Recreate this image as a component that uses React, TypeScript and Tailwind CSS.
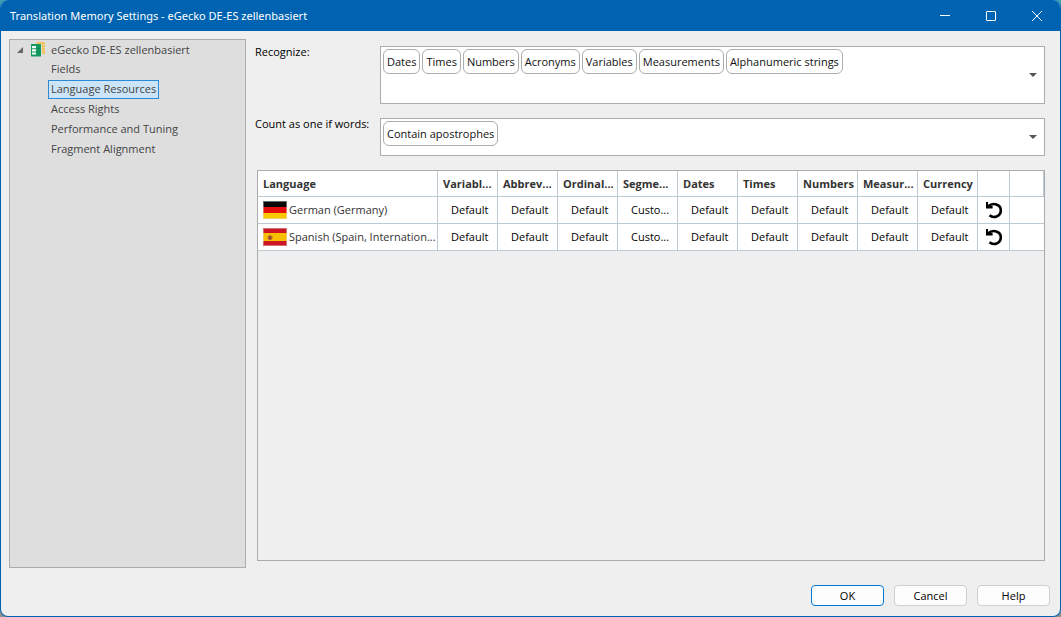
import { useState } from "react";

const pages = [
  "Fields",
  "Language Resources",
  "Access Rights",
  "Performance and Tuning",
  "Fragment Alignment",
];

const recognizers = [
  "Dates",
  "Times",
  "Numbers",
  "Acronyms",
  "Variables",
  "Measurements",
  "Alphanumeric strings",
];

const resourceColumns = [
  "Variabl...",
  "Abbrev...",
  "Ordinal...",
  "Segme...",
  "Dates",
  "Times",
  "Numbers",
  "Measur...",
  "Currency",
];

const resourceValues = [
  "Default",
  "Default",
  "Default",
  "Custo...",
  "Default",
  "Default",
  "Default",
  "Default",
  "Default",
];

function MemoryIcon() {
  return (
    <svg width="15" height="15" viewBox="0 0 15 15" aria-hidden="true">
      <path d="M5.500 0H14v12h-3V2H5.500z" fill="#f0c35e" />
      <path d="M12 2.500h1.500M12 5.500h1.500M12 8.500h1.500" stroke="#e6dcc0" strokeWidth=".8" />
      <rect x="0" y="2" width="10" height="12.500" rx=".5" fill="#14995f" />
      <path d="M1 4h4v2.200H1zM1 7.200h4v2.200H1zM1 10.400h4v2.200H1z" fill="#f4fbf7" />
      <path d="M6.500 6.700h2.500M6.500 9.900h2.500" stroke="#0c7d4b" strokeWidth=".8" />
    </svg>
  );
}

function GermanFlag() {
  return (
    <svg width="24" height="18" viewBox="0 0 24 18" className="shrink-0" aria-hidden="true">
      <rect width="24" height="6" fill="#0a0808" />
      <rect y="6" width="24" height="6" fill="#e60d0d" />
      <rect y="12" width="24" height="6" fill="#fac800" />
      <rect x=".5" y=".5" width="23" height="17" fill="none" stroke="#ddd" strokeOpacity=".45" />
    </svg>
  );
}

function SpanishFlag() {
  return (
    <svg width="24" height="18" viewBox="0 0 24 18" className="shrink-0" aria-hidden="true">
      <rect width="24" height="18" fill="#cc1626" />
      <rect y="5" width="24" height="8" fill="#fac000" />
      <path d="M4.500 8h1L7 6.500 8.500 8h1v2.500L8.500 12h-3l-1-1.500z" fill="#b5762e" />
      <path d="M6 8.500h2.200v2L7 11.500l-1-1z" fill="#9a3a2c" />
      <rect x=".5" y=".5" width="23" height="17" fill="none" stroke="#ddd" strokeOpacity=".45" />
    </svg>
  );
}

function ResetIcon() {
  return (
    <svg width="18" height="18" viewBox="0 0 18 18" aria-hidden="true">
      <path
        d="M3 5.500C8 1 15.800 3.200 15.800 9.300C15.800 15.500 8.500 17.800 4.500 14.200"
        fill="none"
        stroke="#000"
        strokeWidth="2.600"
      />
      <path d="M1 1h2v2.600L5 5h2.600v2.400H1z" fill="#000" />
    </svg>
  );
}

function ChipSelect({ id, items, tall }: { id: string; items: string[]; tall?: boolean }) {
  return (
    <div
      className={`flex min-w-0 flex-1 border border-[#acacac] bg-white p-0.5 ${tall ? "min-h-[58px]" : "min-h-[38px]"}`}
    >
      <ul className="flex flex-1 flex-wrap content-start gap-0.5">
        {items.map((item) => (
          <li
            key={item}
            className="flex h-[25px] items-center rounded-md border border-[#acacac] px-[3px] text-[#111]"
          >
            {item}
          </li>
        ))}
      </ul>
      <button id={id} type="button" className="flex w-[18px] items-center justify-center">
        <svg width="8" height="4" viewBox="0 0 8 4" aria-hidden="true">
          <path d="M0 0h8L4 4z" fill="#555" />
        </svg>
      </button>
    </div>
  );
}

function LanguageRow({ name, flag }: { name: string; flag: React.ReactNode }) {
  return (
    <tr className="h-[27px] bg-white">
      <td className="border-r border-b border-[#bccad4] pl-[5px] text-[#333]">
        <span className="flex items-center gap-0.5 whitespace-nowrap">
          {flag}
          {name}
        </span>
      </td>
      {resourceValues.map((value, i) => (
        <td key={i} className="border-r border-b border-[#bccad4] pl-[13px] whitespace-nowrap text-black">
          {value}
        </td>
      ))}
      <td className="border-r border-b border-[#bccad4]">
        <button type="button" aria-label="Reset" className="flex w-full justify-center">
          <ResetIcon />
        </button>
      </td>
      <td className="border-b border-[#bccad4]" />
    </tr>
  );
}

export default function App() {
  const [page, setPage] = useState("Language Resources");

  return (
    <div className="flex min-h-screen bg-linear-to-b from-[#3aa0b0] to-[#8f8f8f] font-['Open_Sans','Noto_Sans',sans-serif] text-[11px] leading-4">
      <div className="flex flex-1 flex-col overflow-hidden rounded-lg border border-t-0 border-[#0063b1] bg-[#efefef]">
        <header className="flex h-[31px] items-center bg-[#0063b1] pl-[9px] text-white">
          <h1 className="flex-1 font-['Noto_Sans','Open_Sans',sans-serif]">
            Translation Memory Settings - eGecko DE-ES zellenbasiert
          </h1>
          <button type="button" aria-label="Minimize" className="flex h-full w-[46px] items-center justify-center">
            <svg width="10" height="10" viewBox="0 0 10 10">
              <path d="M0 4.500h10" stroke="#fff" />
            </svg>
          </button>
          <button type="button" aria-label="Maximize" className="flex h-full w-[46px] items-center justify-center">
            <svg width="10" height="10" viewBox="0 0 10 10">
              <rect x=".5" y=".5" width="9" height="9" rx=".5" fill="none" stroke="#fff" />
            </svg>
          </button>
          <button type="button" aria-label="Close" className="flex h-full w-[46px] items-center justify-center">
            <svg width="10" height="10" viewBox="0 0 10 10">
              <path d="M0 0l10 10M10 0L0 10" stroke="#fff" />
            </svg>
          </button>
        </header>

        <div className="flex flex-1">
          <nav className="mt-2 mb-12 ml-2 w-[237px] shrink-0 border border-[#acacac] bg-[#dedede] text-[#444]">
            <div className="flex h-[19px] items-center pl-[7px]">
              <svg width="6" height="6" viewBox="0 0 6 6" className="mr-2" aria-hidden="true">
                <path d="M6 0v6H0z" fill="#666" />
              </svg>
              <MemoryIcon />
              <span className="ml-[5px]">eGecko DE-ES zellenbasiert</span>
            </div>
            <ul className="pl-[38px]">
              {pages.map((name) => (
                <li key={name} className="flex h-5 items-center">
                  <button
                    type="button"
                    aria-current={page === name}
                    onClick={() => setPage(name)}
                    className={`h-[19px] border px-0.5 ${page === name ? "border-[#2b8ad6] bg-[#cce4f7]" : "border-transparent"}`}
                  >
                    {name}
                  </button>
                </li>
              ))}
            </ul>
          </nav>

          <main className="flex min-w-0 flex-1 flex-col pt-[15px] pr-[15px] pl-[9px]">
            <div className="flex">
              <label htmlFor="recognize" className="-mt-0.5 w-[125px] shrink-0">
                Recognize:
              </label>
              <ChipSelect id="recognize" items={recognizers} tall />
            </div>
            <div className="mt-3.5 flex">
              <label htmlFor="count" className="-mt-0.5 w-[125px] shrink-0 whitespace-nowrap">
                Count as one if words:
              </label>
              <ChipSelect id="count" items={["Contain apostrophes"]} />
            </div>

            <div className="mt-3.5 ml-0.5 flex-1 border border-[#acacac]">
              <table className="w-full table-fixed border-separate border-spacing-0 text-left">
                <colgroup>
                  <col className="w-[180px]" />
                  {resourceColumns.map((name) => (
                    <col key={name} className="w-[60px]" />
                  ))}
                  <col className="w-8" />
                  <col />
                </colgroup>
                <thead>
                  <tr className="h-[26px] bg-white text-[#333]">
                    {["Language", ...resourceColumns, "", ""].map((name, i) => (
                      <th
                        key={i}
                        scope="col"
                        className="border-r border-b border-[#bccad4] pl-[5px] font-bold whitespace-nowrap"
                      >
                        {name}
                      </th>
                    ))}
                  </tr>
                </thead>
                <tbody>
                  <LanguageRow name="German (Germany)" flag={<GermanFlag />} />
                  <LanguageRow name="Spanish (Spain, Internation..." flag={<SpanishFlag />} />
                </tbody>
              </table>
            </div>

            <footer className="-mr-[5px] flex justify-end gap-2.5 pt-6 pb-2.5">
              <button type="button" className="h-[21px] w-[73px] rounded border border-[#0078d4] bg-[#fdfdfd]">
                OK
              </button>
              <button type="button" className="h-[21px] w-[73px] rounded border border-[#d0d0d0] bg-[#fdfdfd]">
                Cancel
              </button>
              <button type="button" className="h-[21px] w-[73px] rounded border border-[#d0d0d0] bg-[#fdfdfd]">
                Help
              </button>
            </footer>
          </main>
        </div>
      </div>
    </div>
  );
}
